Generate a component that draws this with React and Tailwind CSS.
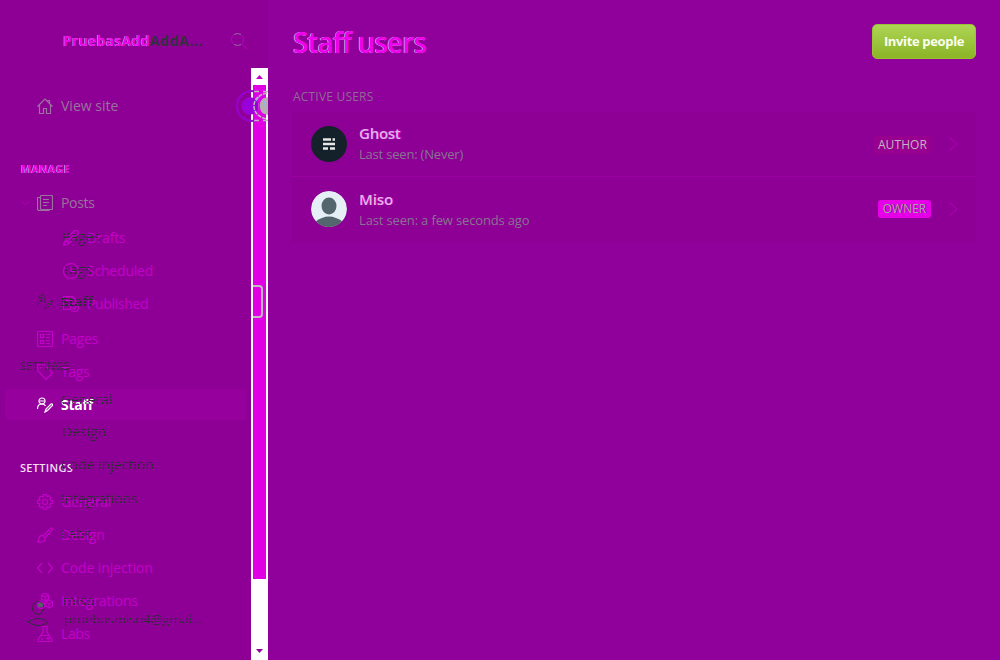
import React from "react";

const icons = {
  home: <><path d="M.5 8.500 8 1l7.500 7.500M2.500 7v8.500h4v-5h3v5h4V7M12.500 5.500V2.500h-2" /></>,
  posts: <><rect x="3.500" y=".5" width="12" height="14" rx="1" /><path d="M3 2.500H.5v11q0 2 2 2h10M6 4.500h6M6 7.500h6M6 10.500h4" /></>,
  drafts: <path d="M.7 15.300l1-5L11 1q2-1.500 3.200 0 2 1.200.5 3L6 13.500zM2 10l4 3.500M10 2.500l3.500 3.500M4 11.500l7-7" />,
  clock: <><circle cx="8" cy="8" r="7.500" /><path d="M8 3.500V8.500h4" /></>,
  published: <><path d="M7 13.500H.5V.5h9l3 3v3M3.500.5v4h5v-4M3 8.500h4" /><circle cx="11.500" cy="11.500" r="4" /><path d="m9.500 11.500 1.500 1.500 2.500-3" /></>,
  pages: <><rect x=".5" y=".5" width="15" height="15" rx="1" /><path d="M3.500 3.500h3v3h-3zM3.500 9.500h3v3h-3zM9 3.500h4M9 6.500h4M9 9.500h4M9 12.500h4" /></>,
  tag: <><path d="M.5 2.500q0-2 2-2L8 1l7.500 8L9 15.500 1 7z" /><circle cx="4" cy="4" r="1" /></>,
  staff: <><circle cx="5" cy="4" r="3" /><path d="M.5 12q0-5 4.500-5 2.500 0 3.500 2M8 15l1-3 5-5q2-.5 1.500 1.500l-5 5zM3 4h4" /></>,
  gear: <><path d="m6.500 .7 3 0 .5 2 2-.9 2 2-1 2 2.500.7v2.500l-2.500.8 1 2-2 2-2-1-.5 2.400h-3l-.5-2.400-2 1-2-2 1-2L.5 9.300V6.800L3 6.100l-1-2 2-2 2 .9z" /><circle cx="8" cy="8" r="2.500" /></>,
  brush: <path d="M6 9 14 .8q2 0 1.300 2L8 11M6 8.500l2 2q.5 3-2 4-2 1-5.500.5Q2 14 2 11q1-3 4-2.500" />,
  code: <path d="M5 3 .5 8 5 13M11 3l4.500 5L11 13" />,
  cubes: <path d="m8 0 3.500 2v4L8 8 4.500 6V2zM4.500 2 8 4l3.500-2M8 4v4M12 7l3.500 2v4L12 15l-3.500-2V9zM8.500 9l3.500 2 3.500-2M12 11v4M4 8l3.500 2v4L4 16 .5 14v-4zM.5 10 4 12l3.500-2" />,
  labs: <path d="M5 .5h6M6 1v5L.8 14q0 1.500 1.200 1.500h12q1.200 0 1.200-1.500L10 6V1M4 9.500h8M9 12.500h4M11 10.500v4M5 12v2" />,
};

const Icon = ({ name, className = "" }) => (
  <svg viewBox="0 0 16 16" className={"size-4 shrink-0 fill-none stroke-current " + className} strokeWidth="1.200">{icons[name]}</svg>
);

const Row = ({ icon, label, tone = "text-[#c400cb]", track = "", sub, className = "" }) => (
  <div className={"flex h-[33px] shrink-0 items-center whitespace-nowrap " + (sub ? "gap-[8px] pl-[63px] " : "gap-2 pl-[37px] ") + tone + " " + className}>
    <Icon name={icon} />
    <span className={"text-[14px] leading-[20px] " + track}>{label}</span>
  </div>
);

const Trace = ({ className, size = "text-[14px]", children }) => (
  <span className={"absolute z-10 whitespace-nowrap leading-[20px] text-[#26302f] [mask-image:repeating-linear-gradient(0deg,#000_0px_1.5px,transparent_2px_3px)] " + size + " " + className}>{children}</span>
);

const Member = ({ avatar, name, seen, badge, owner }) => (
  <div className={"flex items-center pl-[19px] pr-[18px] " + (owner ? "h-[64px]" : "h-[65px] border-b border-[#9b00a0]")}>
    {avatar}
    <div className={"ml-3 flex-1 " + (owner ? "" : "-mt-px")}>
      <h3 className={"text-[15px] font-semibold leading-[21px] text-[#dcb5e0] [text-shadow:0.6px_0_#f000f0] " + (owner ? "tracking-[-0.1px]" : "tracking-[-0.25px]")}>{name}</h3>
      <p className={"text-[13px] leading-[20px] text-[#867591] " + (owner ? "tracking-[-0.15px]" : "tracking-[-0.2px]")}>{seen}</p>
    </div>
    <span className={"mr-px flex h-[18px] items-center justify-center rounded-[3px] text-[12px] " + (owner ? "w-[53px] bg-[#e500e7] text-[11px] text-[#a8a0ad] [text-shadow:0.7px_0_#8e0096]" : "mt-[2px] w-[57px] bg-[#98008f] tracking-[0.1px] text-[#c4b5c2]")}>{badge}</span>
    <svg viewBox="0 0 9 14" className="ml-[17px] h-[14px] w-[9px] fill-none stroke-[#b400ba]"><path d="M.5.500 8 7 .5 13.500" /></svg>
  </div>
);

export default function App() {
  return (
    <div className="flex h-[660px] w-[1000px] overflow-hidden bg-[#90009a] font-['Open_Sans','Noto_Sans',sans-serif]">
      <aside className="relative flex w-[268px] shrink-0 flex-col bg-[#8e0095]">
        <header className="flex h-[68px] shrink-0 items-center justify-between pl-[63px] pr-[21px] pt-[13px]">
          <div className="whitespace-nowrap text-[14px] font-bold">
            <span className="tracking-[0.25px] text-[#f000f0] [text-shadow:-0.5px_0_#cbbccc]">PruebasAdd</span><span className="tracking-[0.6px] text-[#33303f]">AddA...</span>
          </div>
          <svg viewBox="0 0 16 16" className="size-4 fill-none stroke-[#bb00c0]"><circle cx="6.500" cy="6.500" r="6" /><path d="M11 11 L16 16" /><path d="M3 1.500q3.500-2 7 0M3 11.500q3.500 2 7 0" className="stroke-[#8e6997]" /></svg>
        </header>
        <div className="flex min-h-0 flex-1">
          <nav className="flex w-[251px] shrink-0 flex-col pt-[21px]">
            <Row icon="home" label="View site" tone="text-[#99739c]" />
            <h2 className="mt-[39px] h-4 pl-[21px] text-[11px] font-bold leading-4 tracking-[0.05px] text-[#e500e7] [text-shadow:-0.5px_0_#d6c9d6]">MANAGE</h2>
            <div className="mt-[9px] flex items-center">
              <svg viewBox="0 0 10 6" className="-mr-[30px] ml-[21px] h-[6px] w-[9px] fill-none stroke-[#b400b9]"><path d="M.5.500 5 5 9.500.500" /></svg>
              <Row icon="posts" label="Posts" tone="text-[#98739b]" track="tracking-[-0.3px]" />
            </div>
            <Row icon="drafts" label="Drafts" sub className="mt-0.5" track="tracking-[-0.3px]" />
            <Row icon="clock" label="Scheduled" sub track="tracking-[-0.2px]" />
            <Row icon="published" label="Published" sub track="tracking-[-0.35px]" />
            <Row icon="pages" label="Pages" className="mt-0.5" track="tracking-[-0.3px]" />
            <Row icon="tag" label="Tags" track="tracking-[-0.4px]" />
            <div className="mb-0.5 ml-[5px] mt-px flex h-[31px] w-[241px] shrink-0 items-center gap-2 rounded bg-[#96009c] pl-8 text-white">
              <Icon name="staff" className="stroke-[#e2cde5]" />
              <span className="text-[14px] font-bold tracking-[-0.25px]">Staff</span>
            </div>
            <h2 className="mt-[38px] h-4 pl-5 text-[11px] font-semibold leading-4 tracking-[0.3px] text-[#efdff0]">SETTINGS</h2>
            <Row icon="gear" label="General" className="mt-[9px]" track="tracking-[-0.2px]" />
            <Row icon="brush" label="Design" track="tracking-[-0.1px]" />
            <Row icon="code" label="Code injection" track="tracking-[-0.1px]" />
            <Row icon="cubes" label="Integrations" track="tracking-[-0.15px]" />
            <Row icon="labs" label="Labs" track="tracking-[-0.4px]" />
          </nav>
          <div className="flex w-[17px] shrink-0 flex-col bg-white">
            <div className="flex h-[17px] items-center justify-center"><svg viewBox="0 0 7 4" className="h-1 w-[7px] fill-[#c000c5]"><path d="M0 4h7L3.500 0z" /></svg></div>
            <div className="ml-0.5 h-[494px] w-[13px] bg-[#e100e3]" />
            <div className="flex flex-1 items-end justify-center pb-[7px]"><svg viewBox="0 0 7 4" className="h-1 w-[7px] fill-[#91009b]"><path d="M0 0h7L3.500 4z" /></svg></div>
          </div>
        </div>

        <svg viewBox="0 0 32 34" className="absolute left-[236px] top-[89px] z-10 h-[34px] w-8">
          <path d="M19 2.500A14.700 14.700 0 0 0 1 17a14.700 14.700 0 0 0 18 14.500" fill="none" stroke="#9800d0" strokeWidth="2" />
          <circle cx="14" cy="17" r="8.700" fill="#9900da" />
          <path d="M32 8Q22 10 22 17t10 9z" fill="#b4aeb5" />
          <path d="M27 8q-4 4-4 9t4 9" fill="none" stroke="#e100e3" strokeWidth="1.500" />
          <g fill="none" stroke="#bbb6bc" strokeWidth="1.500"><path d="M18 2.500h5M27 2.500h5M18 31.500h5M27 31.500h5" /><path d="M31 4Q18 7 18 17t13 13" strokeDasharray="4 1" /></g>
          <path d="m24 7-4 5M29 12v5" stroke="#88bdf5" />
        </svg>
        <div className="absolute left-[253px] top-[285px] z-10 h-[33px] w-[10px] rounded-r border-2 border-l-0 border-[#c4b8c6]" />
        <Trace className="left-[62px] top-[227px]">Pages</Trace>
        <Trace className="left-[62px] top-[260px]">Tags</Trace>
        <Trace className="left-[61px] top-[292px] font-bold tracking-[-0.25px]">Staff</Trace>
        <svg viewBox="0 0 16 16" className="absolute left-[37px] top-[294px] size-4 fill-none stroke-[#26302f]" strokeDasharray="3 1.500">{icons.staff}</svg>
        <Trace size="text-[11px]" className="left-[20px] top-[356px]">SETTINGS</Trace>
        <Trace className="left-[61px] top-[390px]">General</Trace>
        <Trace className="left-[62px] top-[422px]">Design</Trace>
        <Trace className="left-[61px] top-[455px]">Code injection</Trace>
        <Trace className="left-[61px] top-[489px] tracking-[-0.2px]">Integrations</Trace>
        <Trace className="left-[61px] top-[524px]">Labs</Trace>
        <Trace className="left-[63px] top-[591px]">miso</Trace>
        <Trace size="text-[13px]" className="left-[64px] top-[609px]">pruebasmiso4@gmai...</Trace>
        <svg viewBox="0 0 22 28" className="absolute left-[27px] top-[600px] z-10 h-7 w-[22px] fill-none stroke-[#26302f]" strokeDasharray="4 1">
          <ellipse cx="11" cy="8" rx="5.500" ry="6.500" /><path d="M1 22q10-7 20 0-9 7-20 0" /><circle cx="13.500" cy="5" r="2.500" fill="#536467" stroke="none" />
        </svg>
      </aside>

      <main className="flex-1 px-6 pt-6">
        <header className="flex h-[35px] items-center justify-between">
          <h1 className="mt-[2px] pl-px text-[28px] font-semibold leading-[35px] tracking-[-0.95px] text-[#f000f0] [text-shadow:-0.7px_0_#cabbcc]">Staff users</h1>
          <button className="h-[35px] w-[104px] whitespace-nowrap rounded-[5px] border border-[#98c434] bg-gradient-to-b from-[#aed553] to-[#8bb524] pt-px text-[13px] font-bold tracking-[-0.35px] text-[#fbfff0]">Invite people</button>
        </header>
        <h4 className="mt-[29px] pl-px text-[12px] leading-[18px] tracking-[0.2px] text-[#8f6b94]">ACTIVE USERS</h4>
        <section className="mt-[6px] h-[130px] bg-[#8e0095]">
          <Member name="Ghost" seen="Last seen: (Never)" badge="AUTHOR" avatar={
            <svg viewBox="0 0 36 36" className="size-9 shrink-0"><circle cx="18" cy="18" r="18" fill="#15212a" /><path d="M12 13.500h8m1.500 0h2.500M12 18h12M12 22.500h5m2 0h5" stroke="#e5e7e8" strokeWidth="2.300" /></svg>
          } />
          <Member owner name="Miso" seen="Last seen: a few seconds ago" badge="OWNER" avatar={
            <svg viewBox="0 0 36 36" className="size-9 shrink-0 rounded-full"><circle cx="18" cy="18" r="18" fill="#e5eff5" /><ellipse cx="18" cy="15" rx="7.500" ry="8.500" fill="#53666d" /><path d="M4 31q14-11 28 0l-6 5H10z" fill="#53666d" /></svg>
          } />
        </section>
      </main>
    </div>
  );
}
